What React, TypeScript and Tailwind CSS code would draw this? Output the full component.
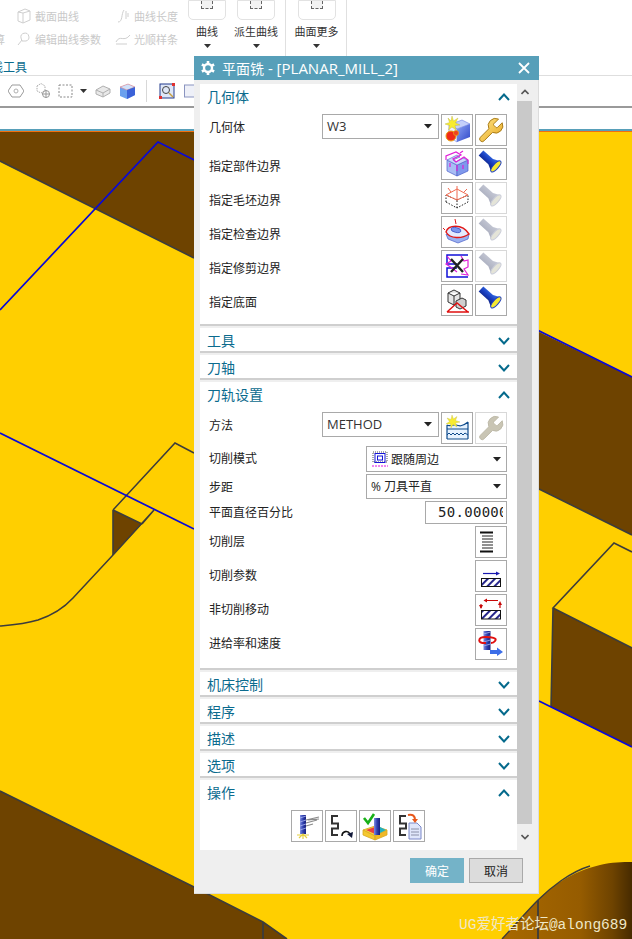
import React from "react";

const CJK = "font-['Noto_Sans_CJK_SC','Noto_Sans',sans-serif]";

function Defs() {
  return (
    <svg width="0" height="0" className="absolute">
      <defs>
        <linearGradient id="torch" x1="0" y1="0" x2="0" y2="1">
          <stop offset="0" stopColor="#3f7cf0" />
          <stop offset="0.5" stopColor="#1a3fc0" />
          <stop offset="1" stopColor="#0a1a70" />
        </linearGradient>
        <linearGradient id="torchOff" x1="0" y1="0" x2="0" y2="1">
          <stop offset="0" stopColor="#c9ccd8" />
          <stop offset="1" stopColor="#a7abbc" />
        </linearGradient>
        <linearGradient id="cubeSide" x1="0" y1="0" x2="1" y2="1">
          <stop offset="0" stopColor="#8ea4f5" />
          <stop offset="1" stopColor="#2f48c8" />
        </linearGradient>
        <linearGradient id="wrench" x1="0" y1="0" x2="1" y2="1">
          <stop offset="0" stopColor="#ffe68a" />
          <stop offset="1" stopColor="#e8a820" />
        </linearGradient>
        <linearGradient id="tool" x1="0" y1="0" x2="1" y2="0">
          <stop offset="0" stopColor="#7f8fe0" />
          <stop offset="0.5" stopColor="#3040b0" />
          <stop offset="1" stopColor="#18207a" />
        </linearGradient>
        <linearGradient id="orangeFace" x1="0" y1="0" x2="1" y2="0">
          <stop offset="0" stopColor="#a86800" />
          <stop offset="0.6" stopColor="#965c00" />
          <stop offset="0.85" stopColor="#6e4300" />
          <stop offset="1" stopColor="#472b00" />
        </linearGradient>
        <pattern id="hatch" width="5" height="5" patternUnits="userSpaceOnUse" patternTransform="rotate(45)">
          <rect width="5" height="5" fill="#fff" />
          <rect width="2" height="5" fill="#26268c" />
        </pattern>
      </defs>
    </svg>
  );
}

const Ic = ({ children }: { children: React.ReactNode }) => (
  <svg width="30" height="30" viewBox="0 0 30 30" fill="none">
    {children}
  </svg>
);

const Torch = ({ off }: { off?: boolean }) => (
  <Ic>
    <g transform="translate(5 4) rotate(42)">
      <path d="M0 -3.5 L13 -3.5 L20 -7 L20 7 L13 3.5 L0 3.5 Z" fill={off ? "url(#torchOff)" : "url(#torch)"} />
      <ellipse cx="20" cy="0" rx="2.6" ry="7" fill={off ? "#e4e4d8" : "#f4e832"} stroke={off ? "#c9ccd8" : "#1f3fc0"} strokeWidth="1" />
    </g>
  </Ic>
);

const Wrench = ({ off }: { off?: boolean }) => (
  <Ic>
    <g transform="translate(0 1) scale(1.22)">
      <path
        d="M14.7 6.3a1 1 0 0 0 0 1.4l1.6 1.6a1 1 0 0 0 1.4 0l3.77-3.77a6 6 0 0 1-7.94 7.94l-6.91 6.91a2.12 2.12 0 0 1-3-3l6.91-6.91a6 6 0 0 1 7.94-7.94l-3.76 3.76z"
        fill={off ? "#c9c5b4" : "url(#wrench)"}
        stroke={off ? "#bdb9a8" : "#a87a18"}
        strokeWidth="0.8"
      />
    </g>
  </Ic>
);

const GeomNew = () => (
  <Ic>
    <path d="M7 10 L20 5 L28 9 L15 14 Z" fill="#c4d0fa" stroke="#6c7ee0" strokeWidth=".6" />
    <path d="M7 10 L15 14 L15 27 L7 22 Z" fill="#eef1ff" stroke="#6c7ee0" strokeWidth=".6" />
    <path d="M15 14 L28 9 L28 22 L15 27 Z" fill="url(#cubeSide)" />
    <path d="M10 1 L11.5 6 L16 3 L13.5 8 L18 10 L13 10.5 L14 15 L10 12 L6.5 15 L7.5 10.5 L3 9 L7.5 7.5 L6 3 L9 6 Z" fill="#f8ec30" stroke="#b8b040" strokeWidth=".4" />
    <circle cx="9" cy="21" r="5" fill="#f02818" stroke="#e8a010" strokeWidth="1" />
    <circle cx="14" cy="18" r="2.6" fill="#f04020" stroke="#e8a010" strokeWidth=".7" />
  </Ic>
);

const PartB = () => (
  <Ic>
    <path d="M5 11 L15 16 L15 27 L5 22 Z" fill="#a8bcf4" stroke="#4a60c8" strokeWidth=".7" />
    <path d="M15 16 L26 11 L26 22 L15 27 Z" fill="#7f98ec" stroke="#4a60c8" strokeWidth=".7" />
    <path d="M5 11 L15 6 L18 8 L11 11 L14 13 L21 9 L26 11 L15 16 Z" fill="#c9d5fb" stroke="#4a60c8" strokeWidth=".6" />
    <path d="M4 11 V7 L14 3 L19 6 L11 10 L14 13 L22 8 L26 11 V15 M8 14 V18 M21 16 V20 M15 16 V22 M18 4 L21 2" stroke="#e020d8" strokeWidth="1.2" />
  </Ic>
);

const BlankB = () => (
  <Ic>
    <path d="M4 19 L15 25 L26 19 V12 M4 19 V12 M15 25 V17 M15 17 L4 12 M15 17 L26 12" stroke="#222" strokeWidth="1" strokeDasharray="1.5 1.5" />
    <path d="M4 12 L15 6 L26 12 L15 17 Z M15 6 V17 M9 9 L6 5 M22 9 L25 6 M15 6 V3" stroke="#f06a50" strokeWidth="1" />
  </Ic>
);

const CheckB = () => (
  <Ic>
    <path d="M4 17 L6 22 L16 26 L26 22 L27 17 L16 20 Z" fill="#9ab0f0" stroke="#4a60c8" strokeWidth=".7" />
    <path d="M4 15 C6 8 20 6 27 17 C20 22 8 22 4 15 Z" fill="#e4eaff" stroke="#e01818" strokeWidth="1.4" />
    <ellipse cx="14" cy="13" rx="5" ry="2.4" fill="#7a94ee" stroke="#3048c0" strokeWidth=".7" transform="rotate(12 14 13)" />
    <path d="M14 7 L13 2 M3 13 L1 11" stroke="#e01818" strokeWidth="1" />
  </Ic>
);

const TrimB = () => (
  <Ic>
    <path d="M26 4 H5 V13 H15 M15 17 H5 V26 H26" stroke="#1010d8" strokeWidth="1.5" />
    <path d="M5 5 L9 10 L4 13 L10 17 L15 21 M19 5 L22 10 L26 9 L26 16 L22 18 L26 24 L19 23" stroke="#e020d8" strokeWidth="1.2" />
    <path d="M9 8 L21 21 M21 8 L9 21" stroke="#222" strokeWidth="2.4" />
  </Ic>
);

const Floor = () => (
  <Ic>
    <path d="M6 8 L12 5 L18 8 V17 L12 20 L6 17 Z M6 8 L12 11 L18 8 M12 11 V20" fill="#e6e6e6" stroke="#333" strokeWidth="1" />
    <path d="M14 16 L20 13 L24 15 V21 L18 24 L14 22 Z" fill="#cfcfcf" stroke="#333" strokeWidth="1" />
    <path d="M5 27 H27 M5 27 L15 18 L26 27" stroke="#e01010" strokeWidth="1.4" />
  </Ic>
);

const MethodNew = () => (
  <Ic>
    <path d="M5 12 C8 14 11 11 14 12 S20 14 26 9 V26 H5 Z" fill="#e6f2ff" />
    <path d="M5 12 C8 14 11 11 14 12 S20 14 26 9 M5 16 H26 M5 26 H26 M5 12 V26 M26 9 V26" stroke="#0c4a8c" strokeWidth="1.2" />
    <path d="M5 22 L7 20 L9 22 L11 20 L13 22 L15 20 L17 22 L19 20 L21 22 L23 20 L26 22" stroke="#0c4a8c" strokeWidth="1" />
    <path d="M10 2 L11.5 6 L15 3.5 L13.5 7.5 L18 9 L13.5 10 L15 14 L11 11.5 L9 15 L8.5 11 L4 11 L7.5 8.5 L5 5 L9 6.5 Z" fill="#f8ec30" stroke="#c8c050" strokeWidth=".4" />
  </Ic>
);

const Levels = () => (
  <Ic>
    <path d="M4 5.5 H17 M4 24.5 H17" stroke="#111" strokeWidth="2" />
    <path d="M6 9 H17 M6 12 H17 M6 15 H17 M6 18 H17 M6 21 H17" stroke="#222" strokeWidth="1" />
  </Ic>
);

const Params = () => (
  <Ic>
    <rect x="5.5" y="17.5" width="19" height="8" fill="url(#hatch)" stroke="#111" />
    <path d="M7 12.5 H20" stroke="#1818b0" strokeWidth="1.2" />
    <path d="M20 10.5 L24 12.5 L20 14.5 Z" fill="#1818b0" />
  </Ic>
);

const NonCut = () => (
  <Ic>
    <rect x="5.5" y="15.5" width="19" height="8.5" fill="url(#hatch)" stroke="#111" />
    <path d="M10 5.5 H22 M5 9 V13 M24 8 V13" stroke="#c80808" strokeWidth="1.2" />
    <path d="M11 3.5 L7.5 5.5 L11 7.5 Z M3 10 H7 L5 14 Z M22 10 H26 L24 6 Z" fill="#c80808" />
  </Ic>
);

const Feed = () => (
  <Ic>
    <rect x="7.5" y="2" width="7" height="19" fill="url(#tool)" />
    <path d="M7.5 5 L14.5 3 M7.5 9 L14.5 7 M7.5 13 L14.5 11 M7.5 17 L14.5 15" stroke="#aab4f0" strokeWidth=".8" />
    <path d="M10 14 C1 15 1 8 10 8 C15 8 22 9 19 12 C18 13.5 16 14 15 14" stroke="#e01010" strokeWidth="2" />
    <path d="M14 23 H22" stroke="#3c6ee8" strokeWidth="4" />
    <path d="M21 18.5 L27 23 L21 27 Z" fill="#3c6ee8" />
  </Ic>
);

const Generate = () => (
  <Ic>
    <rect x="8" y="4" width="6" height="19" fill="url(#tool)" />
    <path d="M8 7 L14 5 M8 11 L14 9 M8 15 L14 13 M8 19 L14 17" stroke="#aab4f0" strokeWidth=".8" />
    <path d="M14 9 L27 6 M14 12 L25 9 M14 15 L21 13 M16 9 L27 8" stroke="#8a8a8a" strokeWidth="1.2" />
    <path d="M5 24 H17 M7 27 L11 23 L15 27 M11 23 V28" stroke="#e6d040" strokeWidth="1.2" />
  </Ic>
);

const Snake = () => <path d="M12 5 H6 V12.5 H12 V17.5 H6 V24 H12" stroke="#333" strokeWidth="2" />;

const Replay = () => (
  <Ic>
    <Snake />
    <path d="M16 25 C16 20 22 19 24 23" stroke="#111" strokeWidth="1.6" />
    <path d="M21 23 L27 21 L26 27 Z" fill="#101838" />
  </Ic>
);

const Verify = () => (
  <Ic>
    <path d="M3 19 L15 15 L27 19 L15 25 Z" fill="#f8d840" stroke="#d8a820" strokeWidth=".8" />
    <path d="M3 19 V24 L15 29 V25 Z" fill="#f4c830" stroke="#d8a820" strokeWidth=".8" />
    <path d="M15 25 V29 L27 24 V19 Z" fill="#f0b828" stroke="#d8a820" strokeWidth=".8" />
    <path d="M6 19 L15 16 V23 Z" fill="#e84040" />
    <path d="M20 16 L26 19 L20 22 Z" fill="#20b0c0" />
    <rect x="14" y="7" width="6" height="17" fill="url(#tool)" />
    <path d="M4 7 L8 12 L14 3" stroke="#18b018" strokeWidth="2.6" />
  </Ic>
);

const ListDoc = () => (
  <Ic>
    <Snake />
    <path d="M15 12 H23 L27 16 V28 H15 Z" fill="#dfe6fb" stroke="#7a88c8" strokeWidth="1" />
    <path d="M17 18 H25 M17 21 H25 M17 24 H25" stroke="#8a8fa8" strokeWidth="1" />
    <path d="M14 4 C19 3 21 5 21 9" stroke="#e8581c" strokeWidth="2" />
    <path d="M18 8 H24 L21 12 Z" fill="#e8581c" />
  </Ic>
);

const Btn = ({ children, off }: { children: React.ReactNode; off?: boolean }) => (
  <div className={`w-8 h-8 shrink-0 border bg-white flex items-center justify-center ${off ? "border-[#d8d8d8]" : "border-[#a9a9a9]"}`}>
    {children}
  </div>
);

const Caret = () => (
  <svg width="8" height="5" viewBox="0 0 8 5" className="shrink-0">
    <path d="M0 0 H8 L4 4.5 Z" fill="#222" />
  </svg>
);

const Chev = ({ up }: { up?: boolean }) => (
  <svg width="12" height="8" viewBox="0 0 12 8" fill="none">
    <path d={up ? "M1 7 L6 1.5 L11 7" : "M1 1 L6 6.5 L11 1"} stroke="#056a8c" strokeWidth="2" />
  </svg>
);

const Head = ({ title, up }: { title: string; up?: boolean }) => (
  <div className="h-[26px] shrink-0 flex items-center justify-between pl-[7px] pr-[7px]">
    <span className={`text-[14px] leading-[26px] pb-[2px] text-[#0b6b8e] ${CJK}`}>{title}</span>
    <Chev up={up} />
  </div>
);

const Collapsed = ({ title }: { title: string }) => (
  <div className="h-[25px] shrink-0 overflow-hidden bg-white border-b-2 border-[#cfcfcf]">
    <Head title={title} />
  </div>
);

const Label = ({ children, low, raise }: { children: React.ReactNode; low?: boolean; raise?: boolean }) => (
  <span className={`text-[12px] leading-[16px] text-[#222] ${CJK} ${low ? "pt-[3px]" : ""} ${raise ? "pb-[2px]" : ""}`}>{children}</span>
);

const IconRow = ({ label, a, b, bOff }: { label: string; a: React.ReactNode; b: React.ReactNode; bOff?: boolean }) => (
  <div className="h-8 flex items-center justify-between">
    <Label low>{label}</Label>
    <div className="flex gap-[2px]">
      <Btn>{a}</Btn>
      <Btn off={bOff}>{b}</Btn>
    </div>
  </div>
);

const OneRow = ({ label, icon }: { label: string; icon: React.ReactNode }) => (
  <div className="h-8 flex items-center justify-between">
    <Label raise>{label}</Label>
    <Btn>{icon}</Btn>
  </div>
);

const SelectRow = ({ label, value, a, b, bOff }: { label: string; value: string; a: React.ReactNode; b: React.ReactNode; bOff?: boolean }) => (
  <div className="h-8 flex items-start justify-between">
    <div className="h-[25px] flex items-center">
      <Label>{label}</Label>
    </div>
    <div className="flex gap-[2px]">
      <div className="w-[117px] h-[25px] border border-[#a9a9a9] bg-white flex items-center justify-between pl-[4px] pr-[6px]">
        <span className="text-[13px] text-[#333] font-['Open_Sans',sans-serif]">{value}</span>
        <Caret />
      </div>
      <Btn>{a}</Btn>
      <Btn off={bOff}>{b}</Btn>
    </div>
  </div>
);

const Ghost = ({ kind }: { kind: number }) => (
  <svg width="16" height="16" viewBox="0 0 16 16" fill="none" stroke="#cfcfcf" strokeWidth="1" className="shrink-0">
    {kind === 0 && <path d="M2 4 L9 1 L14 3 V12 L7 15 L2 13 Z M7 5 V15 M2 4 L7 5 L14 3" />}
    {kind === 1 && <path d="M3 14 C8 14 6 6 9 2 M11 3 V11 M13 5 V9" />}
    {kind === 2 && <path d="M2 14 L6 9 M5 7 A4 4 0 1 1 10 10 L6 10 Z" />}
    {kind === 3 && <path d="M1 11 C5 3 9 12 15 4 M1 13 H12" />}
  </svg>
);

const GhostItem = ({ kind, text, w }: { kind: number; text: string; w: string }) => (
  <div className={`flex items-center gap-[3px] ${w}`}>
    <Ghost kind={kind} />
    <span className={`text-[11px] whitespace-nowrap text-[#c9c9c9] ${CJK}`}>{text}</span>
  </div>
);

const RibbonBtn = ({ label, w }: { label: string; w: string }) => (
  <div className={`flex flex-col items-center ${w}`}>
    <div className="w-[38px] h-[20px] border border-[#e2e2e2] rounded-b-[5px] flex justify-center">
      <div className="w-[12px] h-[8px] border border-[#666] border-t-0 border-dashed bg-[#f3f3f3]" />
    </div>
    <span className={`mt-[2px] text-[11px] leading-[18px] text-[#333] whitespace-nowrap ${CJK}`}>{label}</span>
    <div className="mt-[4px]">
      <svg width="7" height="4" viewBox="0 0 7 4">
        <path d="M0 0 H7 L3.5 4 Z" fill="#333" />
      </svg>
    </div>
  </div>
);

function Toolbar() {
  return (
    <div className="h-[131px] bg-white flex flex-col">
      <div className="h-[76px] border-b border-[#dedede] flex overflow-hidden">
        <div className="w-[286px] h-full border-r border-[#e0e0e0] flex">
          <div className="w-[188px] flex flex-col">
            <div className="flex flex-col gap-[6px] pt-[8px]">
              <div className="flex pl-[16px]">
                <GhostItem kind={0} text="截面曲线" w="w-[99px]" />
                <GhostItem kind={1} text="曲线长度" w="" />
              </div>
              <div className="flex">
                <div className="w-[16px] overflow-hidden">
                  <span className={`block -ml-[6px] text-[11px] text-[#c9c9c9] whitespace-nowrap ${CJK}`}>算</span>
                </div>
                <GhostItem kind={2} text="编辑曲线参数" w="w-[99px]" />
                <GhostItem kind={3} text="光顺样条" w="" />
              </div>
            </div>
            <div className={`mt-[12px] ml-[-9px] text-[12px] leading-[16px] text-[#0b6b8e] ${CJK}`}>线工具</div>
          </div>
          <div className="flex">
            <RibbonBtn label="曲线" w="w-[38px]" />
            <div className="w-[11px]" />
            <RibbonBtn label="派生曲线" w="w-[38px]" />
          </div>
        </div>
        <div className="w-[61px] h-full border-r border-[#e0e0e0] flex justify-center pl-[1px]">
          <RibbonBtn label="曲面更多" w="w-[38px]" />
        </div>
      </div>
      <div className="h-[32px] border-b-2 border-[#9a9a9a] flex items-center pl-[8px]">
        <svg width="16" height="16" viewBox="0 0 16 16" fill="none" className="mr-[10px]">
          <path d="M4 2 H12 L16 8 L12 14 H4 L0 8 Z" stroke="#9a9a9a" />
          <circle cx="8" cy="8" r="2" stroke="#b0b0b0" />
        </svg>
        <svg width="17" height="16" viewBox="0 0 17 16" fill="none" className="mr-[7px]">
          <path d="M3 3 L7 0.5 L11 3 V8 L7 10 L3 8 Z" stroke="#aaa" strokeDasharray="1.5 1" />
          <circle cx="12" cy="11" r="3.5" stroke="#999" />
          <path d="M8 11 H16 M12 7 V15" stroke="#999" />
        </svg>
        <svg width="15" height="14" viewBox="0 0 15 14" fill="none" className="mr-[7px]">
          <rect x="1" y="1" width="13" height="12" stroke="#888" strokeDasharray="2 1.5" />
        </svg>
        <svg width="7" height="4" viewBox="0 0 7 4" className="mr-[8px]">
          <path d="M0 0 H7 L3.5 4 Z" fill="#333" />
        </svg>
        <svg width="16" height="14" viewBox="0 0 16 14" fill="none" className="mr-[8px]">
          <path d="M1 6 L8 2 L15 5 V9 L8 13 L1 10 Z" fill="#e9e9e9" stroke="#b0b0b0" />
          <path d="M1 6 L8 9 L15 5 M8 9 V13" stroke="#b0b0b0" />
        </svg>
        <svg width="17" height="17" viewBox="0 0 17 17" className="mr-[10px]">
          <path d="M1 4 L9 1 L16 4 V12 L8 16 L1 13 Z" fill="#6aa0ee" />
          <path d="M1 4 L9 1 L16 4 L8 7 Z" fill="#cfe2fb" stroke="#e88" strokeWidth=".6" />
          <path d="M8 7 L16 4 V12 L8 16 Z" fill="#3b62d8" />
        </svg>
        <div className="w-px h-[22px] bg-[#d8d8d8] mr-[12px]" />
        <svg width="16" height="16" viewBox="0 0 16 16" fill="none" className="mr-[9px]">
          <rect x="1" y="1" width="14" height="14" fill="#dfe7f8" stroke="#223a8c" />
          <circle cx="7" cy="7" r="3.5" stroke="#444" />
          <path d="M10 10 L14 14" stroke="#c8a040" strokeWidth="1.5" />
          <rect x="13" y="0" width="3" height="3" fill="#e03030" />
          <rect x="0" y="13" width="3" height="3" fill="#e03030" />
        </svg>
        <svg width="12" height="14" viewBox="0 0 12 14" fill="none">
          <rect x="0.5" y="1" width="11" height="12" fill="#eef0f8" stroke="#8a94c0" />
        </svg>
      </div>
      <div className="flex-1 bg-white" />
      <div className="h-[2px] bg-[#579fb9]" />
    </div>
  );
}

function Canvas() {
  const dark = "#3c3c3c";
  const blue = "#0808d8";
  return (
    <svg className="block" width="632" height="808" viewBox="0 131 632 808">
      <rect x="0" y="131" width="632" height="808" fill="#ffcf00" />
      <path d="M0 131 H194 V258 L0 161 Z" fill="#6e4300" />
      <rect x="0" y="131" width="632" height="1" fill="#f07010" />
      <path d="M0 161 L194 258" stroke={dark} strokeWidth="1.6" />
      <path d="M539 332 L632 377 V535 L539 489 Z" fill="#6e4300" />
      <path d="M539 489 L632 535" stroke={dark} strokeWidth="1.6" />
      <path d="M553 608 L632 648 V747 L551 707 Z" fill="#6e4300" />
      <path d="M0 791 L194 887 L263 922 L287 939 H0 Z" fill="#6e4300" />
      <path d="M0 791 L194 887 L263 922 L287 939" stroke={dark} strokeWidth="1.6" fill="none" />
      <path d="M263 922 V939" stroke={dark} strokeWidth="1.8" />
      <path d="M502 939 C515 925 528 910 538 900 C550 888 570 872 600 865 C612 862 622 862 632 862 V939 Z" fill="url(#orangeFace)" />
      <path d="M502 939 C515 925 528 910 538 900 C550 888 570 872 590 866" stroke={dark} strokeWidth="1.4" fill="none" />
      <path d="M538 900 V939" stroke={dark} strokeWidth="1.8" />
      <path d="M113 510 L142 524 L113 555 Z" fill="#6e4300" />
      <path d="M113 510 V555 M113 510 L142 524" stroke={dark} strokeWidth="1.6" />
      <path d="M194 453 L175 443 L113 510 M142 524 L154 510 M154 510 L113 555 L73 598 C62 610 50 616 38 620 C25 624 12 625 0 626" stroke={dark} strokeWidth="1.5" fill="none" />
      <path d="M632 552 L614 543 L553 608 L632 648 M553 608 L551 707" stroke={dark} strokeWidth="1.6" fill="none" />
      <path d="M0 310 L158 142 L632 377" stroke={blue} strokeWidth="1.7" fill="none" />
      <path d="M0 433 L194 529" stroke={blue} strokeWidth="1.7" />
      <path d="M539 701 L632 747" stroke={blue} strokeWidth="1.7" />
    </svg>
  );
}

function Dialog() {
  return (
    <div className="absolute left-[194px] top-[56px] w-[345px] h-[838px] bg-[#efefef] shadow-[inset_-1px_-1px_0_#dcdcdc] flex flex-col">
      <div className="h-6 shrink-0 bg-[#579fb9] flex items-center justify-between pl-[7px] pr-[9px]">
        <div className="flex items-center gap-[7px]">
          <svg width="14" height="14" viewBox="0 0 14 14" fill="none">
            <circle cx="7" cy="7" r="4" stroke="#fff" strokeWidth="2.4" />
            <path d="M7 0 V2.5 M7 11.5 V14 M0.9 3.5 L3.1 4.7 M10.9 9.3 L13.1 10.5 M0.9 10.5 L3.1 9.3 M10.9 4.7 L13.1 3.5" stroke="#fff" strokeWidth="2.6" />
          </svg>
          <span className="text-[15px] leading-[24px] text-white whitespace-nowrap font-['Open_Sans',sans-serif]">
            <span className={`text-[14px] ${CJK}`}>平面铣</span> - [PLANAR_MILL_2]
          </span>
        </div>
        <svg width="12" height="12" viewBox="0 0 12 12">
          <path d="M1 1 L11 11 M11 1 L1 11" stroke="#fff" strokeWidth="1.8" />
        </svg>
      </div>
      <div className="h-[770px] shrink-0 flex pt-[4px] pl-[6px]">
        <div className="w-[317px] flex flex-col gap-[2px]">
          <div className="h-[242px] shrink-0 bg-white border-b-2 border-[#cfcfcf]">
            <Head title="几何体" up />
            <div className="pt-[4px] pl-[9px] pr-[10px] flex flex-col gap-[2px]">
              <SelectRow label="几何体" value="W3" a={<GeomNew />} b={<Wrench />} />
              <IconRow label="指定部件边界" a={<PartB />} b={<Torch />} />
              <IconRow label="指定毛坯边界" a={<BlankB />} b={<Torch off />} bOff />
              <IconRow label="指定检查边界" a={<CheckB />} b={<Torch off />} bOff />
              <IconRow label="指定修剪边界" a={<TrimB />} b={<Torch off />} bOff />
              <IconRow label="指定底面" a={<Floor />} b={<Torch />} />
            </div>
          </div>
          <Collapsed title="工具" />
          <Collapsed title="刀轴" />
          <div className="h-[288px] shrink-0 bg-white border-b-2 border-[#cfcfcf]">
            <Head title="刀轨设置" up />
            <div className="pt-[4px] pl-[9px] pr-[10px] flex flex-col gap-[2px]">
              <SelectRow label="方法" value="METHOD" a={<MethodNew />} b={<Wrench off />} bOff />
              <div className="h-[26px] flex items-center justify-between">
                <Label raise>切削模式</Label>
                <div className="w-[141px] h-[26px] border border-[#a9a9a9] flex items-center justify-between pl-[5px] pr-[5px]">
                  <div className="flex items-center gap-[3px]">
                    <svg width="16" height="16" viewBox="0 0 16 16" fill="none">
                      <rect x="1" y="1" width="14" height="10" stroke="#555" strokeDasharray="1 1" />
                      <rect x="3" y="2.5" width="10" height="9" stroke="#1414d8" />
                      <rect x="5.5" y="5" width="5" height="4" stroke="#1414d8" />
                      <path d="M0 15 H16" stroke="#e010e0" strokeDasharray="2 1" />
                    </svg>
                    <span className={`text-[12px] text-[#222] ${CJK}`}>跟随周边</span>
                  </div>
                  <Caret />
                </div>
              </div>
              <div className="h-[25px] flex items-center justify-between">
                <Label>步距</Label>
                <div className="w-[141px] h-[25px] border border-[#a9a9a9] flex items-center justify-between pl-[4px] pr-[5px]">
                  <span className="text-[12px] text-[#222] font-['Open_Sans','Noto_Sans_CJK_SC',sans-serif]">% 刀具平直</span>
                  <Caret />
                </div>
              </div>
              <div className="h-[23px] flex items-center justify-between">
                <Label raise>平面直径百分比</Label>
                <div className="w-[82px] h-[23px] border border-[#a9a9a9] pl-[12px] pr-[3px] flex items-center">
                  <span className="block w-full overflow-hidden whitespace-nowrap text-[14px] tracking-[0.3px] leading-[21px] text-[#222] font-['DejaVu_Sans_Mono',monospace]">50.00000</span>
                </div>
              </div>
              <OneRow label="切削层" icon={<Levels />} />
              <OneRow label="切削参数" icon={<Params />} />
              <OneRow label="非切削移动" icon={<NonCut />} />
              <OneRow label="进给率和速度" icon={<Feed />} />
            </div>
          </div>
          <Collapsed title="机床控制" />
          <Collapsed title="程序" />
          <Collapsed title="描述" />
          <Collapsed title="选项" />
          <div className="h-[70px] shrink-0 bg-white">
            <Head title="操作" up />
            <div className="pt-[4px] pr-[1px] flex justify-center gap-[2px]">
              <Btn><Generate /></Btn>
              <Btn><Replay /></Btn>
              <Btn><Verify /></Btn>
              <Btn><ListDoc /></Btn>
            </div>
          </div>
        </div>
        <div className="w-[15px] flex flex-col">
          <div className="h-[17px] flex items-center justify-center">
            <svg width="8" height="6" viewBox="0 0 8 6" fill="none">
              <path d="M0.5 5 L4 1.5 L7.5 5" stroke="#555" strokeWidth="1.6" />
            </svg>
          </div>
          <div className="h-[727px] bg-[#c9c9c9]" />
          <div className="h-[26px] flex items-center justify-center">
            <svg width="8" height="6" viewBox="0 0 8 6" fill="none">
              <path d="M0.5 1 L4 4.5 L7.5 1" stroke="#555" strokeWidth="1.6" />
            </svg>
          </div>
        </div>
      </div>
      <div className="flex justify-end gap-[5px] pr-[16px] pt-[8px]">
        <div className={`w-[54px] h-[25px] bg-[#74b3c8] flex items-center justify-center text-[12px] text-white ${CJK}`}>确定</div>
        <div className={`w-[54px] h-[25px] bg-[#dcdcdc] border border-[#a9a9a9] flex items-center justify-center text-[12px] text-[#222] ${CJK}`}>取消</div>
      </div>
    </div>
  );
}

export default function App() {
  return (
    <div className="relative w-[632px] h-[939px] overflow-hidden bg-white">
      <Defs />
      <Toolbar />
      <Canvas />
      <Dialog />
      <div className="absolute left-[459px] top-[915px] text-[14.5px] leading-[20px] text-[#efe8c8] whitespace-nowrap font-['Liberation_Mono','Noto_Sans_CJK_SC',monospace]">UG爱好者论坛@along689</div>
    </div>
  );
}
